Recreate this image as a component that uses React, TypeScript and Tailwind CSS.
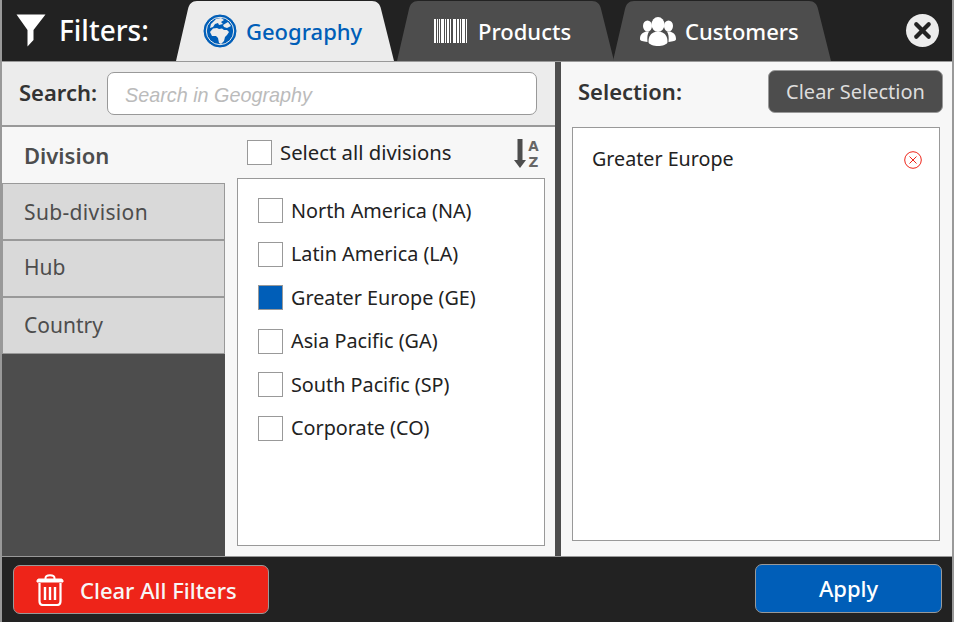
import React from "react";
import { X } from "lucide-react";

const FunnelIcon = () => (
  <svg width="30" height="33" viewBox="0 0 30 33" className="shrink-0">
    <path d="M0.5 0.5 H29.5 L17.5 16 V26 L11.5 32.5 V16 Z" fill="#ffffff" />
  </svg>
);

const GlobeIcon = () => (
  <svg width="34" height="34" viewBox="0 0 34 34" className="shrink-0">
    <circle cx="17" cy="17" r="16" fill="#005eb8" stroke="#005eb8" />
    <circle cx="17" cy="17" r="13.7" fill="none" stroke="#ececec" strokeWidth="1" />
    <path d="M13 5 L18 4 L21 6 L18 8 L20 10 L16 11 L15 9 L12 10 L10 13 L7 14 L8 10 Z" fill="#ececec" />
    <path d="M7 18 L10 14.5 L14 14 L16 15 L19 14.5 L21 16 L24 16 L26 18 L24 21 L22 23 L21 27 L18 30 L16 29 L15 24 L13 22 L9 22 Z" fill="#ececec" />
    <path d="M20 11 L25 8 L28 12 L24 14 L21 13 Z" fill="#ececec" />
  </svg>
);

const BarcodeIcon = () => {
  const bars = [
    [0, 2], [3, 1], [5, 1], [7, 3], [11, 1], [13, 2], [16, 1], [19, 3], [23, 2], [26, 1], [28, 3], [32, 1],
  ];
  return (
    <svg width="33" height="24" viewBox="0 0 33 24" className="shrink-0">
      {bars.map(([x, w]) => (
        <rect key={x} x={x} y="0" width={w} height="24" fill="#ffffff" />
      ))}
    </svg>
  );
};

const PeopleIcon = () => (
  <svg width="36" height="29" viewBox="0 0 36 29" className="shrink-0">
    <g fill="#ffffff">
      <ellipse cx="7.5" cy="9" rx="4.5" ry="5.5" />
      <path d="M0 22 C0 17 3 15.5 6 14.5 L9 14.5 C7.5 17 7 20 7.5 25 C3 24.5 0 24 0 22 Z" />
      <ellipse cx="28.5" cy="9" rx="4.5" ry="5.5" />
      <path d="M36 22 C36 17 33 15.5 30 14.5 L27 14.5 C28.5 17 29 20 28.5 25 C33 24.5 36 24 36 22 Z" />
      <ellipse cx="18" cy="7.5" rx="6.5" ry="7.5" />
      <path d="M8.5 25 C8.5 18.5 11 16.5 15 15 L21 15 C25 16.5 27.5 18.5 27.5 25 C27.5 27.5 22 29 18 29 C14 29 8.5 27.5 8.5 25 Z" />
    </g>
  </svg>
);

const TrashIcon = () => (
  <svg width="28" height="32" viewBox="0 0 28 32" className="shrink-0" fill="none" stroke="#ffffff">
    <path d="M9.5 5 V4 C9.5 2 11 1.2 14 1.2 C17 1.2 18.5 2 18.5 4 V5" strokeWidth="2" />
    <path d="M1 7 C1 5.5 2 5 3 5 H25 C26 5 27 5.5 27 7 V8 H1 Z" fill="#ffffff" strokeWidth="1" />
    <path d="M3.5 9 V27 C3.5 29.5 5 31 7 31 H21 C23 31 24.5 29.5 24.5 27 V9" strokeWidth="2.2" />
    <path d="M9 13 V26 M14 13 V26 M19 13 V26" strokeWidth="2.4" />
  </svg>
);

const SortIcon = () => (
  <svg width="27" height="36" viewBox="0 0 27 36" className="shrink-0">
    <path d="M3.5 4 H8.5 V25 H12 L6 33 L0 25 H3.5 Z" fill="#4d4d4d" />
    <text x="19.5" y="16" textAnchor="middle" fontSize="13.5" fontWeight="700" fill="#666666" fontFamily="DejaVu Sans">A</text>
    <text x="19.5" y="32" textAnchor="middle" fontSize="13.5" fontWeight="700" fill="#666666" fontFamily="DejaVu Sans">Z</text>
  </svg>
);

// tab outline, widths come from the tab itself
const TabShape = ({ width, fill }: { width: number; fill: string }) => (
  <svg width={width} height="60" viewBox={`0 0 ${width} 60`} className="absolute left-0 top-0">
    <path
      d={`M0 60 L12 8 C13 3 16 0 21 0 H${width - 22} C${width - 17} 0 ${width - 14} 3 ${width - 13} 8 L${width} 60 Z`}
      fill={fill}
    />
  </svg>
);

const Tab = ({ label, icon, width, active, className }: { label: string; icon: React.ReactNode; width: number; active?: boolean; className: string }) => (
  <div className={`relative h-[60px] ${className}`} style={{ width }}>
    <TabShape width={width} fill={active ? "#ececec" : "#4d4d4d"} />
    <div className={`relative flex h-full items-center text-[22px] font-medium ${active ? "text-[#005eb8]" : "text-white"}`}>
      {icon}
      {label}
    </div>
  </div>
);

const Checkbox = ({ checked }: { checked?: boolean }) => (
  <span className={`h-[25px] w-[25px] shrink-0 border border-[#999999] ${checked ? "bg-[#005eb8]" : "bg-white"}`} />
);

const divisions = [
  { name: "North America (NA)" },
  { name: "Latin America (LA)" },
  { name: "Greater Europe (GE)", checked: true },
  { name: "Asia Pacific (GA)" },
  { name: "South Pacific (SP)" },
  { name: "Corporate (CO)" },
];

const levels = [
  { name: "Sub-division", extra: "pt-[2px] tracking-[0.35px]" },
  { name: "Hub", extra: "pb-[2px]" },
  { name: "Country", extra: "" },
];

export default function App() {
  return (
    <div className="flex h-[622px] w-[954px] flex-col border-x-2 border-[#999999] bg-[#222222] font-['Noto_Sans',sans-serif]">
      {/* Header */}
      <div className="flex h-[61px] shrink-0 items-start">
        <div className="flex h-[60px] w-[174px] items-center pl-[14px]">
          <FunnelIcon />
          <span className="ml-[13px] text-[28px] font-medium leading-none text-white">Filters:</span>
        </div>
        <Tab label="Geography" width={218} active className="mt-px z-10" icon={<span className="ml-[27px] mr-[9px]"><GlobeIcon /></span>} />
        <Tab label="Products" width={217} className="ml-[3px] mt-px" icon={<span className="ml-[37px] mr-[11px]"><BarcodeIcon /></span>} />
        <Tab label="Customers" width={218} className="-ml-px mt-px" icon={<span className="ml-[27px] mr-[9px]"><PeopleIcon /></span>} />
        <div className="ml-[75px] mt-[14px] flex h-[33px] w-[33px] items-center justify-center rounded-full bg-[#ececec]">
          <X size={25} strokeWidth={4} className="text-[#222222]" />
        </div>
      </div>

      {/* Body */}
      <div className="flex h-[496px] shrink-0 border-y border-[#999999]">
        <div className="flex w-[553px] flex-col bg-[#ececec]">
          <div className="flex h-[65px] shrink-0 items-center border-b-2 border-[#999999] pl-[17px]">
            <span className="-mt-[2px] w-[88px] text-[22px] font-semibold text-[#333333]">Search:</span>
            <div className="flex h-[43px] w-[430px] items-center rounded-[7px] border border-[#999999] bg-white pl-[17px] pt-[4px] font-['Liberation_Sans',sans-serif] text-[19.8px] italic text-[#bbbbbb]">
              Search in Geography
            </div>
          </div>
          <div className="flex min-h-0 flex-1">
            <div className="flex w-[223px] flex-col bg-[#4d4d4d] text-[21px] text-[#4d4d4d]">
              <div className="flex h-[56px] items-center bg-[#f7f7f7] pl-[22px] text-[22px] font-semibold">Division</div>
              {levels.map((item) => (
                <div key={item.name} className={`flex h-[57px] items-center border border-[#999999] bg-[#d9d9d9] pl-[21px] ${item.extra}`}>
                  {item.name}
                </div>
              ))}
            </div>
            <div className="flex flex-1 flex-col bg-[#f7f7f7] pl-[12px] pr-[10px]">
              <div className="flex h-[51px] shrink-0 items-center pl-[10px] text-[20.3px] text-[#222222]">
                <Checkbox />
                <span className="ml-[8px]">Select all divisions</span>
                <span className="ml-auto mr-[4px]"><SortIcon /></span>
              </div>
              <div className="mb-[10px] flex flex-1 flex-col border border-[#999999] bg-white pl-[20px] pt-[19px]">
                {divisions.map((d) => (
                  <div key={d.name} className="mb-[18.5px] flex h-[25px] items-center text-[19.8px] text-[#222222]">
                    <Checkbox checked={d.checked} />
                    <span className="ml-[8px]">{d.name}</span>
                  </div>
                ))}
              </div>
            </div>
          </div>
        </div>

        <div className="w-[6px] bg-[#4d4d4d]" />

        <div className="flex flex-1 flex-col bg-[#f7f7f7] pl-[11px] pr-[12px]">
          <div className="flex h-[65px] shrink-0 items-center justify-between pb-[6px] pl-[6px]">
            <span className="text-[22px] font-semibold text-[#333333]">Selection:</span>
            <div className="-mr-[3px] flex h-[43px] w-[175px] items-center justify-center rounded-[7px] border border-[#999999] bg-[#4d4d4d] text-[20px] text-[#dddddd]">
              Clear Selection
            </div>
          </div>
          <div className="mb-[15px] flex flex-1 items-start justify-between border border-[#999999] bg-white pl-[19px] pr-[17px] pt-[16px]">
            <span className="text-[19.7px] leading-[30px] text-[#222222]">Greater Europe</span>
            <svg width="18" height="18" viewBox="0 0 18 18" className="mt-[7px]" fill="none" stroke="#ee2419">
              <circle cx="9" cy="9" r="8.3" />
              <path d="M5.5 5.5 L12.5 12.5 M12.5 5.5 L5.5 12.5" />
            </svg>
          </div>
        </div>
      </div>

      {/* Footer */}
      <div className="flex flex-1 items-center justify-between pl-[11px] pr-[10px]">
        <div className="flex h-[49px] w-[256px] items-center rounded-[7px] border border-[#999999] bg-[#ee2419] pl-[22px] pt-[1px] text-[22px] font-medium text-[#f7f7f7]">
          <TrashIcon />
          <span className="ml-[16px]">Clear All Filters</span>
        </div>
        <div className="mb-[2px] flex h-[49px] w-[187px] items-center justify-center rounded-[7px] border border-[#999999] bg-[#005eb8] text-[22px] font-medium text-white">
          Apply
        </div>
      </div>
    </div>
  );
}
